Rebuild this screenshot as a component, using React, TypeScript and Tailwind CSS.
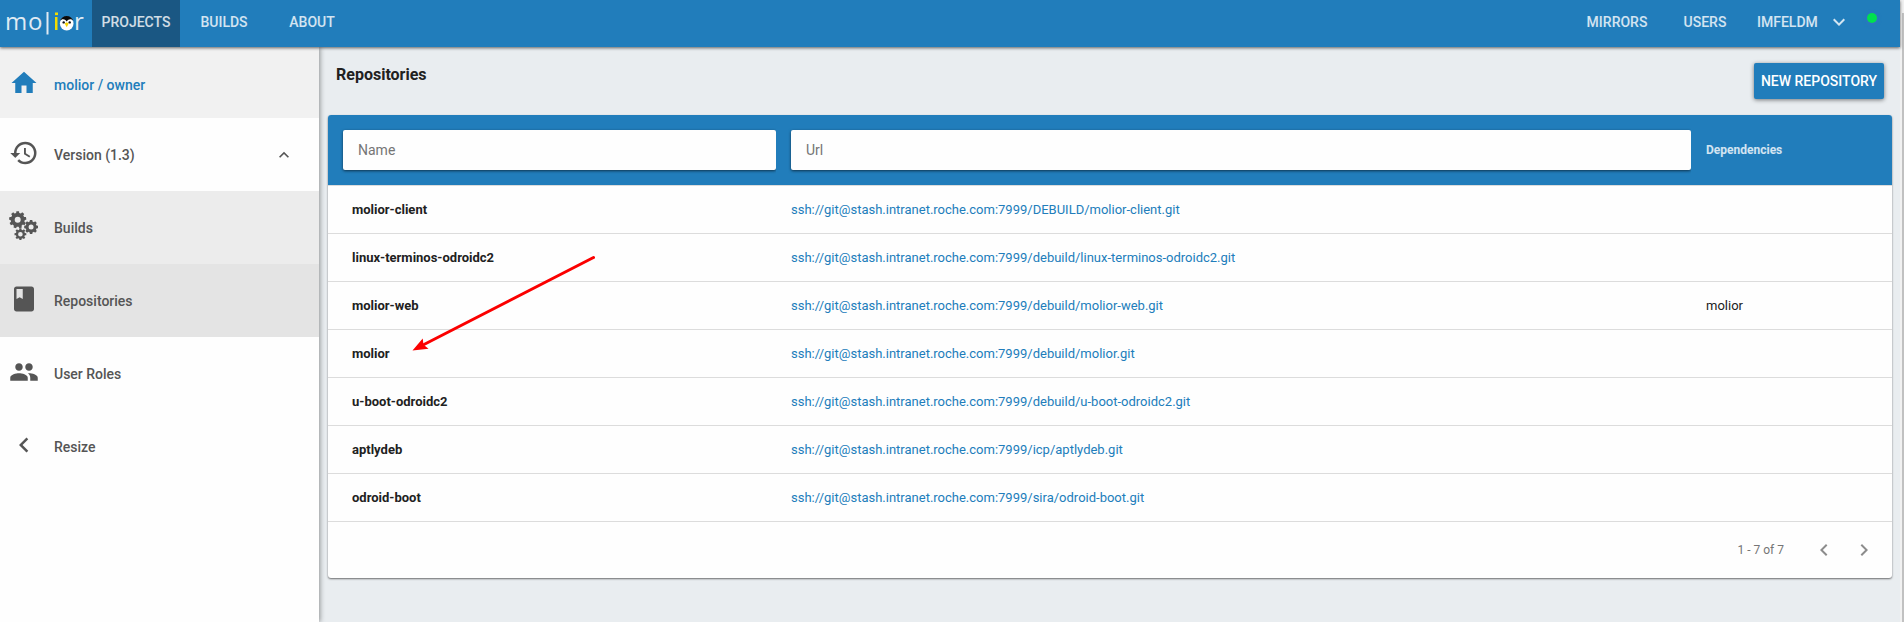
import type { ReactNode } from "react";
import {
  MdChevronLeft,
  MdChevronRight,
  MdClass,
  MdExpandLess,
  MdExpandMore,
  MdHistory,
  MdHome,
  MdPeople,
} from "react-icons/md";

const HOST = "ssh://git@stash.intranet.roche.com:7999";

const repositories = [
  { name: "molior-client", url: `${HOST}/DEBUILD/molior-client.git`, deps: "" },
  { name: "linux-terminos-odroidc2", url: `${HOST}/debuild/linux-terminos-odroidc2.git`, deps: "" },
  { name: "molior-web", url: `${HOST}/debuild/molior-web.git`, deps: "molior" },
  { name: "molior", url: `${HOST}/debuild/molior.git`, deps: "" },
  { name: "u-boot-odroidc2", url: `${HOST}/debuild/u-boot-odroidc2.git`, deps: "" },
  { name: "aptlydeb", url: `${HOST}/icp/aptlydeb.git`, deps: "" },
  { name: "odroid-boot", url: `${HOST}/sira/odroid-boot.git`, deps: "" },
];

function Logo() {
  return (
    <svg viewBox="0 0 92 47" className="h-[47px] w-[92px]" role="img" aria-label="molior">
      <g fontFamily="'Open Sans', 'Noto Sans', sans-serif" fontSize="24" fontWeight="400" fill="#dfeaf3">
        <text x="5" y="30">m</text>
        <text x="28" y="30">o</text>
        <text x="74" y="30">r</text>
      </g>
      <rect x="46.5" y="12" width="2" height="22.5" fill="#dfeaf3" />
      <rect x="55" y="17" width="2.5" height="13" fill="#f2dc00" />
      <rect x="55" y="12.5" width="3" height="2.6" fill="#f2dc00" />
      <ellipse cx="66.7" cy="23.5" rx="6.8" ry="7" fill="#fff" />
      <path
        d="M60.1 21C60.8 18 63.5 16 66.700 16s5.900 2 6.600 5C71.800 18.600 68.600 18.600 66.700 21.400 64.800 18.600 61.600 18.600 60.100 21Z"
        fill="#0a0a0a"
      />
      <circle cx="63.7" cy="22.4" r="1.2" fill="#111" />
      <circle cx="69.7" cy="22.4" r="1.2" fill="#111" />
      <path d="M64.7 23.5 66.700 22.300l2 1.200L66.700 27.200Z" fill="#f5d400" />
    </svg>
  );
}

function gearPath(cx: number, cy: number, outer: number, root: number, hole: number, teeth: number) {
  const step = (Math.PI * 2) / teeth;
  const at = (r: number, a: number) => `${(cx + r * Math.cos(a)).toFixed(2)} ${(cy + r * Math.sin(a)).toFixed(2)}`;
  const points: string[] = [];
  for (let i = 0; i < teeth; i++) {
    const a = i * step - Math.PI / 2;
    points.push(at(root, a - step * 0.32), at(outer, a - step * 0.22), at(outer, a + step * 0.22), at(root, a + step * 0.32));
  }
  return `M${points.join("L")}Z M${cx - hole} ${cy}a${hole} ${hole} 0 1 0 ${hole * 2} 0a${hole} ${hole} 0 1 0 ${-hole * 2} 0Z`;
}

function GearsIcon() {
  return (
    <svg viewBox="0 0 30 30" className="size-[30px]" fill="currentColor" fillRule="evenodd" aria-hidden="true">
      <path d={gearPath(8.7, 8.8, 8.7, 7, 3, 9)} />
      <path d={gearPath(22.1, 16, 7, 5.6, 2.5, 8)} />
      <path d={gearPath(11.4, 23.2, 6, 4.6, 2.3, 8)} />
    </svg>
  );
}

function NavTab({ label, active = false }: { label: string; active?: boolean }) {
  return (
    <a
      href="#"
      className={`flex h-full min-w-[88px] items-center justify-center pb-1 text-sm font-medium text-white/80 ${
        active ? "bg-[#1a5783]" : ""
      }`}
    >
      {label}
    </a>
  );
}

function SideItem({
  icon,
  label,
  tone = "",
  height = "h-[73px]",
  trailing,
}: {
  icon: ReactNode;
  label: string;
  tone?: string;
  height?: string;
  trailing?: ReactNode;
}) {
  return (
    <a href="#" className={`flex items-center pl-[9px] text-sm font-medium ${height} ${tone || "text-[#555]"}`}>
      <span className="mb-1 text-[30px]">{icon}</span>
      <span className="ml-[15px] flex-1">{label}</span>
      {trailing}
    </a>
  );
}

function FilterInput({ label }: { label: string }) {
  return (
    <input
      aria-label={label}
      placeholder={label}
      className="block h-10 w-full rounded-xs bg-[#fefefe] px-[15px] text-sm font-normal text-[#212121] shadow-[0_1px_3px_rgba(0,0,0,0.6)] placeholder:text-[#757575]"
    />
  );
}

export default function App() {
  return (
    <div className="flex min-h-screen bg-[#e9edf0] font-['Roboto',sans-serif] text-[#212121]">
      <div className="flex min-w-0 flex-1 flex-col">
        <header className="relative z-20 flex h-[47px] items-center bg-[#217dbb] shadow-[0_1px_3px_rgba(0,0,0,0.6)]">
          <a href="#">
            <Logo />
          </a>
          <nav className="flex h-full flex-1">
            <NavTab label="PROJECTS" active />
            <NavTab label="BUILDS" />
            <NavTab label="ABOUT" />
            <span className="flex-1" />
            <NavTab label="MIRRORS" />
            <NavTab label="USERS" />
          </nav>
          <button
            type="button"
            className="flex w-[110px] items-center justify-between px-2 pb-1 text-sm font-medium text-white/80"
          >
            IMFELDM
            <MdExpandMore className="size-6" />
          </button>
          <span className="mr-[23px] mb-[11px] ml-2 size-[10px] rounded-full bg-[#00e04f] shadow-[0_1px_4px_rgba(60,110,200,0.9)]" />
        </header>

        <div className="flex flex-1">
          <aside className="relative z-10 w-[319px] shrink-0 bg-[#fefefe] shadow-[1px_0_5px_rgba(0,0,0,0.4)]">
            <SideItem icon={<MdHome />} label="molior / owner" height="h-[71px] pt-1" tone="bg-[#f1f1f1] text-[#217dbb]" />
            <SideItem
              icon={<MdHistory />}
              label="Version (1.3)"
              trailing={<MdExpandLess className="mr-[25px] size-5" />}
            />
            <SideItem icon={<GearsIcon />} label="Builds" tone="bg-[#ececec] text-[#555]" />
            <SideItem icon={<MdClass />} label="Repositories" tone="bg-[#e4e4e4] text-[#555]" />
            <SideItem icon={<MdPeople />} label="User Roles" />
            <SideItem icon={<MdChevronLeft />} label="Resize" />
          </aside>

          <main className="min-w-0 flex-1 pr-2 pl-[9px]">
            <div className="flex h-[68px] items-start justify-between pt-4 pr-2 pl-2">
              <h1 className="text-base font-bold">Repositories</h1>
              <button
                type="button"
                className="h-9 min-w-[130px] rounded-xs bg-[#217dbb] px-[6px] text-sm font-medium text-white shadow-[0_1px_4px_rgba(0,0,0,0.5)]"
              >
                NEW REPOSITORY
              </button>
            </div>

            <section className="relative rounded-[3px] bg-[#fefefe] shadow-[0_1px_2px_rgba(0,0,0,0.55)]">
              <table className="w-full table-fixed text-left text-[13px]">
                <thead>
                  <tr className="h-[70px] border-b border-[#dcdcdc] text-white/80">
                    <th className="w-[448px] rounded-tl-[3px] bg-[#217dbb] pl-[15px]">
                      <FilterInput label="Name" />
                    </th>
                    <th className="bg-[#217dbb] pl-[15px]">
                      <FilterInput label="Url" />
                    </th>
                    <th className="w-[201px] rounded-tr-[3px] bg-[#217dbb] pl-[15px] text-xs font-bold">Dependencies</th>
                  </tr>
                </thead>
                <tbody>
                  {repositories.map((repo) => (
                    <tr key={repo.name} className="h-12 border-b border-[#dcdcdc]">
                      <td className="pt-[2px] pl-6 font-bold">{repo.name}</td>
                      <td className="pt-[2px] pl-[15px]">
                        <a href="#" className="text-[#217dbb]">
                          {repo.url}
                        </a>
                      </td>
                      <td className="pt-[2px] pl-[15px]">{repo.deps}</td>
                    </tr>
                  ))}
                </tbody>
              </table>
              <footer className="flex h-14 items-center justify-end gap-4 pr-4 text-[#757575]">
                <span className="mr-3 text-xs">1 - 7 of 7</span>
                <button type="button" aria-label="Previous page" className="text-[#8c8c8c]">
                  <MdChevronLeft className="size-6" />
                </button>
                <button type="button" aria-label="Next page" className="text-[#8c8c8c]">
                  <MdChevronRight className="size-6" />
                </button>
              </footer>

              <svg
                viewBox="0 0 190 100"
                className="pointer-events-none absolute top-[140px] left-[82px] h-[100px] w-[190px]"
                aria-hidden="true"
              >
                <path d="M183.5 2.5 14 89.5" stroke="#fb0000" strokeWidth="3" strokeLinecap="round" />
                <path d="M2.500 95.500 12.700 83.500l.8 6.200 5 4z" fill="#fb0000" />
              </svg>
            </section>
          </main>
        </div>
      </div>

      <div className="flex w-1 shrink-0 flex-col items-end bg-[#f1f1f1]" aria-hidden="true">
        <div className="mt-[13px] w-[2px] flex-1 bg-[#c1c1c1]" />
      </div>
    </div>
  );
}
